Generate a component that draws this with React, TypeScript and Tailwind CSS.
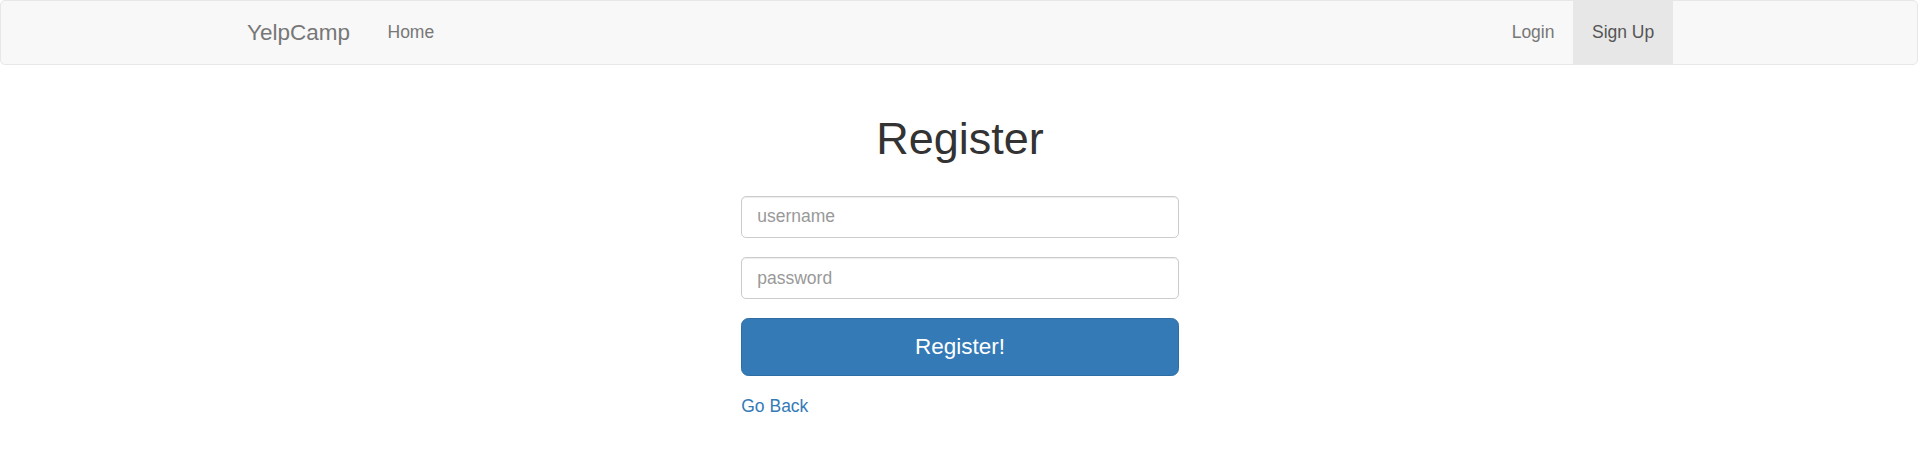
export default function App() {
  const font = { fontFamily: '"Liberation Sans", Arial, sans-serif' };
  const input =
    "block w-full h-[42.5px] px-[15px] py-[7.5px] text-[17.5px] leading-[25px] text-[#555] bg-white border border-[#ccc] rounded-[5px] shadow-[inset_0_1px_1px_rgba(0,0,0,0.075)] placeholder:text-[#999] outline-none";

  return (
    <div className="min-h-screen bg-white text-[#333] text-[17.5px] leading-[25px]" style={font}>
      <nav className="h-[65px] bg-[#f8f8f8] border border-[#e7e7e7] rounded-[5px]">
        <div className="mx-auto w-[1462px] h-full flex justify-between">
          <div className="flex">
            <a href="#" className="pl-[19px] pr-[18.75px] py-[18.75px] text-[22.5px] leading-[25px] text-[#777]">
              YelpCamp
            </a>
            <ul className="flex">
              <li>
                <a href="#" className="block px-[18.75px] py-[18.75px] text-[#777]">
                  Home
                </a>
              </li>
            </ul>
          </div>
          <ul className="flex pr-[17px]">
            <li>
              <a href="#" className="block px-[18.75px] py-[18.75px] text-[#777]">
                Login
              </a>
            </li>
            <li>
              <a href="#" className="block px-[18.75px] py-[18.75px] text-[#555] bg-[#e7e7e7]">
                Sign Up
              </a>
            </li>
          </ul>
        </div>
      </nav>

      <main className="pt-[49px] pl-[2px] flex flex-col items-center">
        <h1 className="text-[45px] leading-[49.5px] font-normal text-[#333] text-center">Register</h1>
        <form className="w-[437.5px] pt-[32px] flex flex-col gap-[18.75px]">
          <input type="text" placeholder="username" className={input} />
          <input type="password" placeholder="password" className={input} />
          <button
            type="button"
            className="w-full h-[57.5px] flex items-center justify-center text-[22.5px] leading-[30px] text-white bg-[#337ab7] border border-[#2e6da4] rounded-[7.5px]"
          >
            Register!
          </button>
          <a href="#" className="text-[#337ab7] leading-[25px] w-fit">
            Go Back
          </a>
        </form>
      </main>
    </div>
  );
}
